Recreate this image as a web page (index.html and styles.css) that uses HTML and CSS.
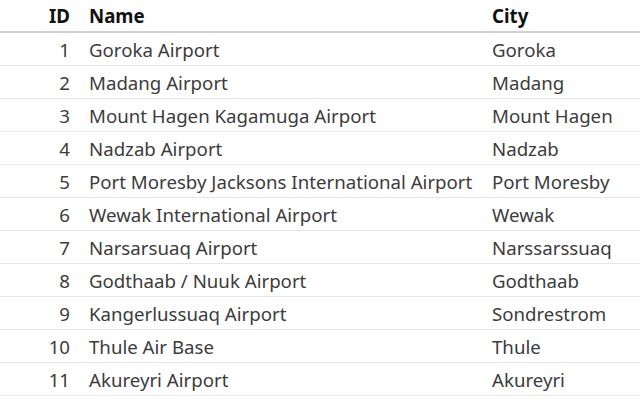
FILE: index.html
```html
<!DOCTYPE html>
<html>
<head>
<meta charset="utf-8">
<link rel="stylesheet" href="styles.css">
</head>
<body>
<table class="grid">
  <colgroup>
    <col class="c-id">
    <col class="c-name">
    <col class="c-city">
  </colgroup>
  <thead>
    <tr><th class="num">ID</th><th>Name</th><th>City</th></tr>
  </thead>
  <tbody>
    <tr><td class="num">1</td><td>Goroka Airport</td><td>Goroka</td></tr>
    <tr><td class="num">2</td><td>Madang Airport</td><td>Madang</td></tr>
    <tr><td class="num">3</td><td>Mount Hagen Kagamuga Airport</td><td>Mount Hagen</td></tr>
    <tr><td class="num">4</td><td>Nadzab Airport</td><td>Nadzab</td></tr>
    <tr><td class="num">5</td><td>Port Moresby Jacksons International Airport</td><td>Port Moresby</td></tr>
    <tr><td class="num">6</td><td>Wewak International Airport</td><td>Wewak</td></tr>
    <tr><td class="num">7</td><td>Narsarsuaq Airport</td><td>Narssarssuaq</td></tr>
    <tr><td class="num">8</td><td>Godthaab / Nuuk Airport</td><td>Godthaab</td></tr>
    <tr><td class="num">9</td><td>Kangerlussuaq Airport</td><td>Sondrestrom</td></tr>
    <tr><td class="num">10</td><td>Thule Air Base</td><td>Thule</td></tr>
    <tr><td class="num">11</td><td>Akureyri Airport</td><td>Akureyri</td></tr>
  </tbody>
</table>
</body>
</html>
```
FILE: styles.css
```css
html, body {
  margin: 0;
  padding: 0;
  background: #fff;
}
body {
  font-family: "Noto Sans", "Open Sans", sans-serif;
  font-size: 18.67px;
  color: #3c3c3c;
}
.grid {
  width: 640px;
  border-collapse: collapse;
  table-layout: fixed;
}
.c-id { width: 80px; }
.c-name { width: 403px; }
.c-city { width: 157px; }
.grid th, .grid td {
  text-align: left;
  padding: 4px 9px;
  line-height: 24px;
  white-space: nowrap;
}
.grid th {
  font-weight: 700;
  color: #111;
  padding-top: 4px;
  padding-bottom: 3px;
  border-bottom: 2px solid #d0d0d0;
}
.grid td {
  border-bottom: 1px solid #e6e6e6;
  padding-top: 5px;
  padding-bottom: 3px;
}
.grid .num {
  text-align: right;
  padding-right: 10px;
}
```
